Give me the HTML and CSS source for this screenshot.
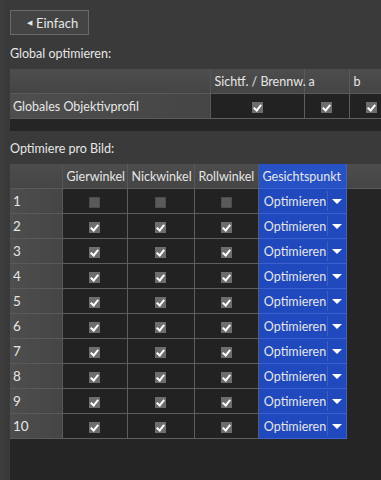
FILE: index.html
```html
<!DOCTYPE html>
<html lang="de">
<head>
    <meta charset="UTF-8">
    <title>Optimierer</title>
    <link rel="stylesheet" href="styles.css">
</head>
<body>
    <div class="panel">
        <button class="back-btn"><span class="tri">&#9664;</span>Einfach</button>

        <div class="label label-global">Global optimieren:</div>
        <div class="grid-box grid-global">
            <table class="grid">
                <colgroup>
                    <col style="width:200px">
                    <col style="width:94px">
                    <col style="width:45px">
                    <col style="width:45px">
                </colgroup>
                <tr>
                    <th class="corner"></th>
                    <th>Sichtf. / Brennw.</th>
                    <th>a</th>
                    <th>b</th>
                </tr>
                <tr>
                    <th class="rowhead">Globales Objektivprofil</th>
                    <td><span class="cb on"></span></td>
                    <td><span class="cb on"></span></td>
                    <td><span class="cb on"></span></td>
                </tr>
            </table>
        </div>

        <div class="label label-bild">Optimiere pro Bild:</div>
        <div class="grid-box grid-bild">
            <table class="grid" id="bild">
                <colgroup>
                    <col style="width:52px">
                    <col style="width:65px">
                    <col style="width:67px">
                    <col style="width:64px">
                    <col style="width:88px">
                    <col>
                </colgroup>
                <tr>
                    <th class="corner"></th>
                    <th>Gierwinkel</th>
                    <th>Nickwinkel</th>
                    <th>Rollwinkel</th>
                    <th class="blue">Gesichtspunkt</th>
                    <th class="filler"></th>
                </tr>
            </table>
        </div>
    </div>
    <script src="script.js"></script>
</body>
</html>
```

FILE: script.js
```js
var table = document.getElementById('bild');

for (var i = 1; i <= 10; i++) {
    var tr = document.createElement('tr');
    var cls = i === 1 ? 'cb' : 'cb on';
    tr.innerHTML =
        '<th class="rowhead num">' + i + '</th>' +
        '<td><span class="' + cls + '"></span></td>' +
        '<td><span class="' + cls + '"></span></td>' +
        '<td><span class="' + cls + '"></span></td>' +
        '<td class="blue combo"><div class="combo-in"><span class="combo-text">Optimieren</span><span class="combo-arrow"></span></div></td>' +
        '<td class="empty"></td>';
    table.appendChild(tr);
}
```

FILE: styles.css
```css
:root {
    --panel: #3a3a3a;
    --view: #252525;
    --head: #494949;
    --line: #5e5e5e;
    --text: #e6e6e6;
    --blue: #2049bd;
}

body {
    margin: 0;
    background: var(--panel);
    font-family: Lato, 'Noto Sans', sans-serif;
    font-size: 12.5px;
    color: var(--text);
    overflow: hidden;
}

.panel {
    width: 381px;
    height: 480px;
    overflow: hidden;
    background: linear-gradient(90deg, #3e3e3e 0, #383838 8px, var(--panel) 10px);
}

.back-btn {
    display: flex;
    align-items: center;
    margin: 10px 0 0 10px;
    width: 79px;
    height: 25px;
    padding: 0 0 0 16px;
    background: #444;
    border: 1px solid #6a6a6a;
    color: var(--text);
    font-family: inherit;
    font-size: 13px;
}

.tri {
    font-size: 7px;
    margin-right: 4px;
}

.label {
    margin-left: 10px;
    height: 16px;
    line-height: 16px;
}

.label-global { margin-top: 11px; }
.label-bild { margin-top: 10px; }

.grid-box {
    margin: 7px 0 0 10px;
    background: var(--view);
    overflow: hidden;
}

.grid-global { height: 62px; }
.grid-bild { height: 317px; }

.grid {
    border-collapse: collapse;
    table-layout: fixed;
    white-space: nowrap;
}

.grid-global .grid { width: 384px; }
.grid-bild .grid { width: 371px; }

.grid th,
.grid td {
    height: 24px;
    padding: 0;
    border: 1px solid var(--line);
    border-top: none;
    border-left: none;
    font-weight: normal;
}

.grid th {
    background: linear-gradient(180deg, #4d4d4d, #454545);
    text-align: left;
    padding-left: 4px;
    border-color: #5a5a5a;
}

.grid th.corner {
    border-right-color: #555;
}

.grid th.rowhead {
    background: linear-gradient(90deg, #4e4e4e, #454545);
    padding-left: 3px;
}

.grid th.num {
    font-size: 13.5px;
}

.grid td {
    background: #222;
    text-align: center;
}

.grid th.filler {
    border-right: none;
}

.grid td.empty {
    background: var(--view);
    border: none;
}

.grid .blue {
    background: var(--blue);
    border-color: #3a61cc;
    border-right-color: #3a61cc;
}

.grid th.blue {
    background: #2752c6;
}

.combo {
    text-align: left;
}

.combo-in {
    display: flex;
    align-items: center;
    height: 24px;
}

.combo-text {
    flex: 1;
    padding-left: 5px;
    font-size: 12.5px;
}

.combo-arrow {
    width: 18px;
    height: 20px;
    border-left: 1px solid #3c5fb8;
    position: relative;
}

.combo-arrow::after {
    content: '';
    position: absolute;
    left: 4px;
    top: 8px;
    border-left: 5px solid transparent;
    border-right: 5px solid transparent;
    border-top: 5px solid #fff;
}

.cb {
    display: inline-block;
    width: 11px;
    height: 11px;
    vertical-align: middle;
    background: #5a5a5a;
    box-shadow: inset 0 0 0 1px #4c4c4c;
    position: relative;
}

.cb.on {
    background: #6d6d6d;
    box-shadow: none;
}

.cb.on::after {
    content: '';
    position: absolute;
    left: 3px;
    top: 1px;
    width: 3px;
    height: 6px;
    border: solid #fff;
    border-width: 0 2px 2px 0;
    transform: rotate(40deg);
}
```
